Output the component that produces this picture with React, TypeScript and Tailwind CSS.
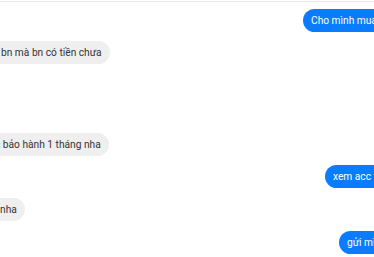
const Mine = ({ text, left }: { text: string; left: string }) => (
  <div
    className={`${left} h-[23px] shrink-0 flex items-center rounded-full bg-[#0a7cff] pl-2 pr-4 text-white whitespace-nowrap w-max`}
  >
    {text}
  </div>
);

const Theirs = ({ text, shift }: { text: string; shift: string }) => (
  <div
    className={`${shift} h-[23px] shrink-0 flex items-center rounded-full bg-[#efefef] pr-2 text-[#333] whitespace-nowrap w-max`}
  >
    {text}
  </div>
);

export default function App() {
  return (
    <div className="w-[374px] h-[257px] overflow-hidden bg-white pt-px font-['Roboto',sans-serif] text-[10.2px]">
      <div className="border-t border-[#e8e8e8] flex flex-col">
        <div className="mt-[7px]">
          <Mine left="ml-[303px]" text="Cho mình mua acc này" />
        </div>
        <div className="mt-[9px]">
          <Theirs shift="-ml-5 pl-[21px]" text="bn mà bn có tiền chưa" />
        </div>
        <div className="mt-[69px]">
          <Theirs shift="-ml-[25px] pl-2" text="Acc bảo hành 1 tháng nha" />
        </div>
        <div className="mt-[9px]">
          <Mine left="ml-[325px]" text="xem acc tk" />
        </div>
        <div className="mt-[10px]">
          <Theirs shift="-ml-5 pl-5" text="nha" />
        </div>
        <div className="mt-[10px]">
          <Mine left="ml-[339px]" text="gửi mình" />
        </div>
      </div>
    </div>
  );
}
